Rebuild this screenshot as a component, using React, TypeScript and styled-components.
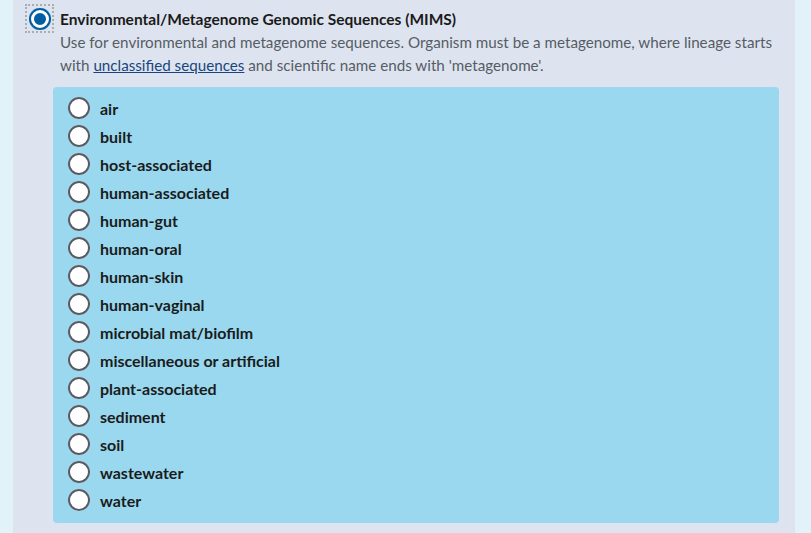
import styled, { createGlobalStyle } from "styled-components";

const GlobalStyle = createGlobalStyle`
  html, body {
    margin: 0;
    padding: 0;
    background: #e1f3f8;
    font-family: "Source Sans Pro", Lato, "Liberation Sans", sans-serif;
  }
`;

const sources = [
  "air",
  "built",
  "host-associated",
  "human-associated",
  "human-gut",
  "human-oral",
  "human-skin",
  "human-vaginal",
  "microbial mat/biofilm",
  "miscellaneous or artificial",
  "plant-associated",
  "sediment",
  "soil",
  "wastewater",
  "water",
];

export default function App() {
  return (
    <>
      <GlobalStyle />
      <Page>
        <Panel>
          <Option>
            <FocusRing>
              <Radio checked />
            </FocusRing>
            <OptionBody>
              <Title>Environmental/Metagenome Genomic Sequences (MIMS)</Title>
              <Description>
                Use for environmental and metagenome sequences. Organism must
                be a metagenome, where lineage starts with{" "}
                <a href="#">unclassified sequences</a> and scientific name ends
                with 'metagenome'.
              </Description>
            </OptionBody>
          </Option>
          <SubList>
            {sources.map((s) => (
              <SubItem key={s}>
                <Radio />
                <span>{s}</span>
              </SubItem>
            ))}
          </SubList>
        </Panel>
      </Page>
    </>
  );
}

const Page = styled.div`
  width: 811px;
  height: 533px;
  padding: 0 16px 0 13px;
  box-sizing: border-box;
  overflow: hidden;
`;

const Panel = styled.div`
  height: 100%;
  background: #dde4ef;
  padding: 4px 16px 0 12px;
  box-sizing: border-box;
`;

const Option = styled.div`
  display: flex;
  align-items: flex-start;
`;

const FocusRing = styled.div`
  width: 29px;
  height: 29px;
  box-sizing: border-box;
  border: 2px dotted #a9aeb1;
  display: flex;
  align-items: center;
  justify-content: center;
  margin-right: 6px;
  flex-shrink: 0;
`;

const Radio = styled.span<{ checked?: boolean }>`
  display: inline-block;
  width: 22px;
  height: 22px;
  box-sizing: border-box;
  border-radius: 50%;
  flex-shrink: 0;
  background: ${(p) => (p.checked ? "#005ea2" : "#ffffff")};
  box-shadow: ${(p) =>
    p.checked
      ? "inset 0 0 0 2px #005ea2, inset 0 0 0 5px #ffffff"
      : "inset 0 0 0 2px #565c65"};
`;

const OptionBody = styled.div`
  padding-top: 4px;
`;

const Title = styled.div`
  font-size: 15.5px;
  font-weight: 700;
  color: #1b1b1b;
  line-height: 22px;
`;

const Description = styled.p`
  margin: 1px 0 0;
  font-size: 15.2px;
  line-height: 23px;
  color: #565c65;
  width: 720px;

  a {
    color: #1a4480;
  }
`;

const SubList = styled.div`
  margin: 10px 0 0 28px;
  background: #99d8ef;
  border-radius: 4px;
  padding: 7px 14px 9px 15px;
  display: flex;
  flex-direction: column;
`;

const SubItem = styled.label`
  display: flex;
  align-items: center;
  height: 28px;
  font-size: 16px;
  font-weight: 700;
  color: #1b1b1b;

  span:last-child {
    margin-left: 10px;
  }
`;
